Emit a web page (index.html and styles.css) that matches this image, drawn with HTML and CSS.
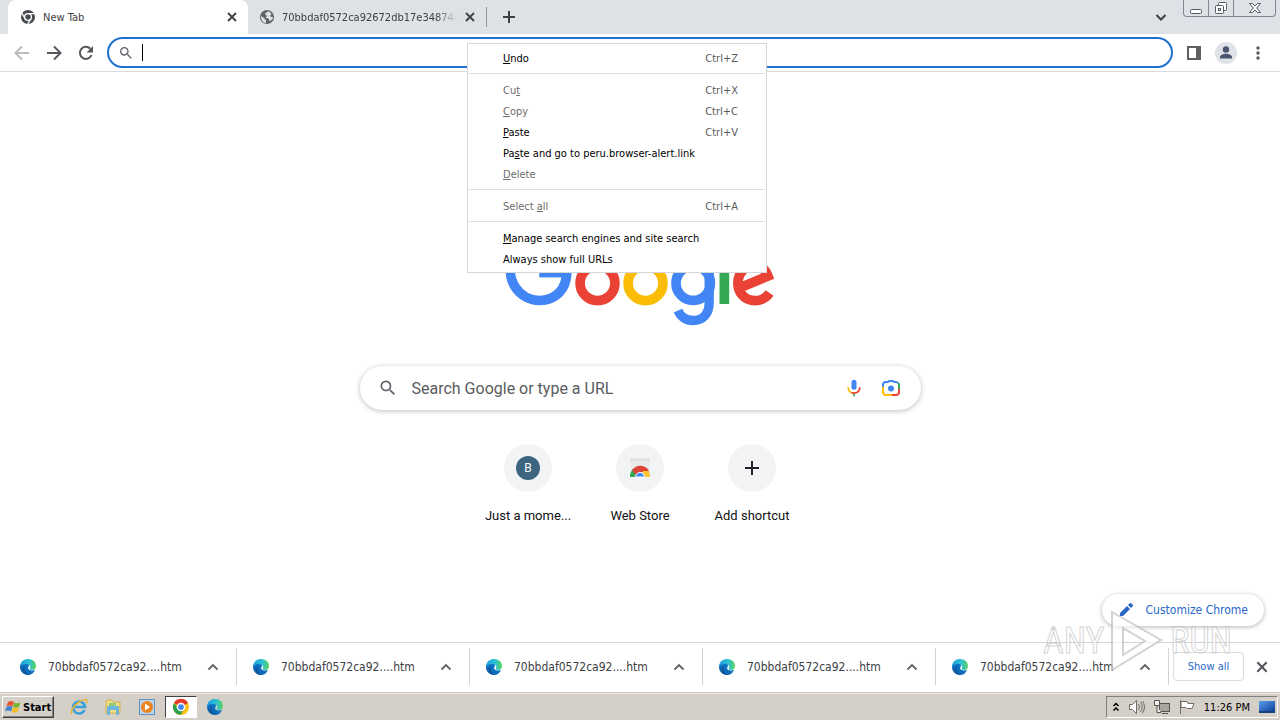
FILE: index.html
```html
<!DOCTYPE html>
<html lang="en">
<head>
<meta charset="utf-8">
<title>New Tab</title>
<link rel="stylesheet" href="styles.css">
</head>
<body>
<svg class="defs" aria-hidden="true">
  <defs>
    <linearGradient id="edgeBlue" x1="0" y1="1" x2="1" y2="0"><stop offset="0" stop-color="#0c59a4"/><stop offset="1" stop-color="#1185d8"/></linearGradient>
    <linearGradient id="edgeTeal" x1="0" y1="0" x2="1" y2="0"><stop offset="0" stop-color="#1b9de2"/><stop offset=".6" stop-color="#2fc2d0"/><stop offset="1" stop-color="#5bd45b"/></linearGradient>
    <linearGradient id="screen" x1="0" y1="0" x2="1" y2="1"><stop offset="0" stop-color="#5aa0ee"/><stop offset="1" stop-color="#0d3f9b"/></linearGradient>
    <symbol id="edge" viewBox="0 0 18 18">
      <path d="M1 9C1 5 5 3 8 5c3 1 2 4 1 5 0 2 3 3 7 2-1 3-4 5-7 5-5 0-8-4-8-8z" fill="url(#edgeBlue)"/>
      <path d="M1 8C2 3 5 1 9 1c5 0 8 3 8 7 0 3-2 4-4 4-2 0-3-1-2-2 1-2-1-4-4-4-3 0-5 1-6 3z" fill="url(#edgeTeal)"/>
      <path d="M6 8c-2 4 0 8 4 9-5 0-8-5-4-9z" fill="#0a4a8c"/>
    </symbol>
    <symbol id="chev" viewBox="0 0 12 12"><path d="M1.500 8.500L6 4l4.500 4.500" fill="none" stroke="#5f6368" stroke-width="1.800"/></symbol>
    <symbol id="cross" viewBox="0 0 12 12"><path d="M2 2l8 8M10 2l-8 8" fill="none" stroke="currentColor" stroke-width="1.800"/></symbol>
    <symbol id="lens" viewBox="0 0 24 24"><path d="M15.500 14h-.79l-.28-.27A6.470 6.470 0 0 0 16 9.500 6.500 6.500 0 1 0 9.500 16c1.610 0 3.090-.59 4.230-1.570l.27.28v.79l5 4.990L20.490 19zm-6 0C7.010 14 5 11.990 5 9.500S7.010 5 9.500 5 14 7.010 14 9.500 11.990 14 9.500 14z" fill="#5f6368"/></symbol>
  </defs>
</svg>

<header class="tabstrip">
  <div class="tab tab-active">
    <svg class="i16" viewBox="0 0 16 16"><circle cx="8" cy="8" r="7" fill="#46494d"/><circle cx="8" cy="8" r="3.400" fill="#46494d" stroke="#fff" stroke-width="1.300"/><path d="M8 4.700h6.500M5.100 9.700L2 4.300M10.900 9.600l-3.200 5.500" stroke="#fff" stroke-width="1.300"/></svg>
    <span class="tab-title">New Tab</span>
    <button class="plain" aria-label="Close tab"><svg class="i12"><use href="#cross"/></svg></button>
  </div>
  <div class="tab tab-back">
    <svg class="i16" viewBox="0 0 16 16"><circle cx="8" cy="8" r="7" fill="#5f6368"/><path d="M9 2c-1 2-2 1-3 3 0 1 2 1 2 2s-2 1-1 2c2 0 4 1 3 3 2 0 4-2 4-4-1 0-2 0-3-1 0-1 2-1 1-3zM2 7l3 2c1 1 1 2 2 2v3c-3 0-5-3-5-7z" fill="#dee1e6"/></svg>
    <span class="tab-title fade">70bbdaf0572ca92672db17e34874d3</span>
    <button class="plain" aria-label="Close tab"><svg class="i12"><use href="#cross"/></svg></button>
  </div>
  <button class="plain new-tab" aria-label="New tab"><svg class="i12" viewBox="0 0 12 12"><path d="M6 0v12M0 6h12" stroke="#3c4043" stroke-width="2"/></svg></button>
  <span class="grow"></span>
  <button class="plain tab-search" aria-label="Search tabs"><svg class="i12" viewBox="0 0 12 12"><path d="M1.500 4L6 8.500 10.500 4" fill="none" stroke="#3c4043" stroke-width="2"/></svg></button>
  <div class="win">
    <button aria-label="Minimize"><svg width="14" height="14" viewBox="0 0 14 14"><rect x="1.500" y="8.500" width="11" height="4" rx="1" fill="#fff" stroke="#555b66"/></svg></button>
    <button aria-label="Restore"><svg width="14" height="14" viewBox="0 0 14 14"><g fill="#fff" stroke="#555b66"><rect x="4.500" y="1.500" width="8" height="8" rx="1"/><rect x="1.500" y="4.500" width="8" height="8" rx="1"/><rect x="4.500" y="7.500" width="2" height="2"/></g></svg></button>
    <button aria-label="Close"><svg width="14" height="14" viewBox="0 0 14 14"><path d="M1.500 2.500h3L7 5l2.500-2.500h3L8.700 7l3.800 4.500h-3L7 9l-2.500 2.500h-3L5.300 7z" fill="#fff" stroke="#555b66"/></svg></button>
  </div>
</header>

<nav class="toolbar">
  <button class="plain" aria-label="Back"><svg class="i16" viewBox="0 0 16 16"><path d="M15 8H2M8 1.500L1.500 8 8 14.500" fill="none" stroke="#babcbe" stroke-width="2"/></svg></button>
  <button class="plain" aria-label="Forward"><svg class="i16" viewBox="0 0 16 16"><path d="M1 8h13M8 1.500L14.500 8 8 14.500" fill="none" stroke="#55585c" stroke-width="2"/></svg></button>
  <button class="plain" aria-label="Reload"><svg class="i16" viewBox="0 0 16 16"><path d="M13.500 10A6 6 0 1 1 12.300 3.800" fill="none" stroke="#55585c" stroke-width="2"/><path d="M15 1v6.500H8.500z" fill="#55585c"/></svg></button>
  <div class="omnibox">
    <svg class="i16"><use href="#lens"/></svg>
    <span class="caret"></span>
    <input type="text" aria-label="Address and search bar">
  </div>
  <button class="plain" aria-label="Side panel"><svg class="i16" viewBox="0 0 16 16"><path d="M1 1h14v14H1zM3 3v10h7V3z" fill="#5f5f5f" fill-rule="evenodd"/></svg></button>
  <button class="plain profile" aria-label="Profile"><svg width="22" height="22" viewBox="0 0 22 22"><circle cx="11" cy="11" r="11" fill="#dfe2e6"/><circle cx="11" cy="7.500" r="3.200" fill="#4d5670"/><path d="M5 16.500v-1.500c0-2 3-3.300 6-3.300s6 1.300 6 3.300v1.500z" fill="#4d5670"/></svg></button>
  <button class="plain" aria-label="Menu"><svg class="i16" viewBox="0 0 16 16" fill="#55585c"><circle cx="8" cy="3" r="1.700"/><circle cx="8" cy="8" r="1.700"/><circle cx="8" cy="13" r="1.700"/></svg></button>
</nav>

<main class="page">
  <svg class="logo" viewBox="0 0 272 92" role="img" aria-label="Google" fill="none" stroke-width="9.700">
    <path d="M56.400 13.400A29.600 29.600 0 1 0 35.300 64.500C52 64.500 62.500 53 62.500 36.700" stroke="#4285f4"/>
    <rect x="35.300" y="32" width="32" height="9.400" fill="#4285f4"/>
    <circle cx="93.500" cy="47.200" r="17.400" stroke="#ea4335"/>
    <circle cx="141.500" cy="47.200" r="17.400" stroke="#fbbc05"/>
    <circle cx="189.200" cy="47.200" r="17.200" stroke="#4285f4"/>
    <path d="M205.200 26.300V66c0 12-6 18.500-16.300 18.500-7 0-12.500-4-15-9.800" stroke="#4285f4" stroke-width="9.300"/>
    <rect x="215.500" y="3" width="9.700" height="65" fill="#34a853"/>
    <path d="M265.600 57C262 62 257.500 64.600 251.100 64.600c-10 0-17.200-7.400-17.200-17.400 0-10.500 7.400-17.500 16.200-17.500 7 0 11.500 4 13.900 10.400L236.500 51.400" stroke="#ea4335"/>
  </svg>
  <div class="search">
    <svg class="i20"><use href="#lens"/></svg>
    <input type="text" placeholder="Search Google or type a URL" aria-label="Search Google or type a URL">
    <button class="plain" aria-label="Voice search"><svg class="i20" viewBox="0 0 24 24"><rect x="9" y="2" width="6" height="12" rx="3" fill="#4285f4"/><path d="M11 18h2v4h-2z" fill="#34a853"/><path d="M5 11c0 4 2 6 4.500 7" fill="none" stroke="#fbbc05" stroke-width="2"/><path d="M9 17.500c5 2 10-1 10-6.500" fill="none" stroke="#ea4335" stroke-width="2"/></svg></button>
    <button class="plain" aria-label="Image search"><svg class="i20" viewBox="0 0 20 20" fill="none" stroke-width="2"><path d="M2 10V7a3 3 0 0 1 3-3h2l1-1h4l1 1h2a3 3 0 0 1 2 1" stroke="#4285f4"/><path d="M17 5q1 1 1 2v7" stroke="#34a853"/><path d="M18 11v3a3 3 0 0 1-3 3h-4" stroke="#ea4335"/><path d="M2 9v5a3 3 0 0 0 3 3h6" stroke="#fbbc05"/><circle cx="10" cy="10.500" r="3" fill="#4285f4"/></svg></button>
  </div>
  <div class="tiles">
    <a class="tile" href="#"><span class="disc"><span class="letter">B</span></span>Just a mome...</a>
    <a class="tile" href="#"><span class="disc"><svg width="24" height="24" viewBox="0 0 24 24"><path d="M2 2h20l-1 16H3z" fill="#eaeaea"/><path d="M2 3h20v2H2z" fill="#dedede"/><path d="M2 21a10 10 0 0 1 3-8l4 8z" fill="#34a853"/><path d="M4 14a10 10 0 0 1 17 1l-2 1H12l-4 3z" fill="#dc4535"/><path d="M15 15h6q1 3 1 6h-8z" fill="#fbc534"/><path d="M7.500 21a4.500 4.500 0 0 1 9 0z" fill="#4285f4" stroke="#fff"/></svg></span>Web Store</a>
    <button class="tile plain"><span class="disc"><svg width="14" height="14" viewBox="0 0 14 14"><path d="M7 0v14M0 7h14" stroke="#202124" stroke-width="2"/></svg></span>Add shortcut</button>
  </div>
  <button class="customize"><svg class="i16" viewBox="0 0 16 16"><path d="M2 14v-3l7-7 3 3-7 7zM10 3l1.500-1.500q1-1 2 0l1 1q1 1 0 2L13 6z" fill="#2867c9"/></svg>Customize Chrome</button>
</main>

<footer class="downloads">
  <div class="item"><svg class="i18"><use href="#edge"/></svg><span>70bbdaf0572ca92....htm</span><button class="plain" aria-label="Options"><svg class="i12"><use href="#chev"/></svg></button></div>
  <div class="item"><svg class="i18"><use href="#edge"/></svg><span>70bbdaf0572ca92....htm</span><button class="plain" aria-label="Options"><svg class="i12"><use href="#chev"/></svg></button></div>
  <div class="item"><svg class="i18"><use href="#edge"/></svg><span>70bbdaf0572ca92....htm</span><button class="plain" aria-label="Options"><svg class="i12"><use href="#chev"/></svg></button></div>
  <div class="item"><svg class="i18"><use href="#edge"/></svg><span>70bbdaf0572ca92....htm</span><button class="plain" aria-label="Options"><svg class="i12"><use href="#chev"/></svg></button></div>
  <div class="item"><svg class="i18"><use href="#edge"/></svg><span>70bbdaf0572ca92....htm</span><button class="plain" aria-label="Options"><svg class="i12"><use href="#chev"/></svg></button></div>
  <button class="show-all">Show all</button>
  <button class="plain close-bar" aria-label="Close downloads"><svg width="14" height="14"><use href="#cross"/></svg></button>
</footer>

<div class="taskbar">
  <button class="start"><svg width="17" height="16" viewBox="0 0 17 16"><path d="M3 3q3-2 6 0L7.500 7.500q-3-2-6 0z" fill="#e8502a"/><path d="M9.500 3.500q3 1.500 6 0L14 8q-3 1.500-6 0z" fill="#79b52c"/><path d="M1.500 8q3-2 6 0L6 12.500q-3-2-6 0z" fill="#3f83d6"/><path d="M8 8.500q3 1.500 6 0L12.500 13q-3 1.500-6 0z" fill="#f4bc28"/></svg>Start</button>
  <div class="quick">
    <button class="plain" aria-label="Internet Explorer"><svg class="i18" viewBox="0 0 18 18" fill="none"><path d="M14.500 12A6 6 0 1 1 15 9H4" stroke="#3aa0dc" stroke-width="2.600"/><path d="M2 16C0 13 4 7 9 4s8-3 8-1q0 1-1 2" stroke="#e6b532" stroke-width="1.500"/></svg></button>
    <button class="plain" aria-label="Explorer"><svg class="i18" viewBox="0 0 18 18"><path d="M2 4l1-2h5l1 2h7v11H2z" fill="#f3dc82" stroke="#cfae4c"/><path d="M5 5h7v3H5z" fill="#8fcb76"/><path d="M3 17V9q0-1 1-1h10q1 0 1 1v8h-3v-5H6v5z" fill="#6bb5df"/></svg></button>
    <button class="plain" aria-label="Media Player"><svg class="i18" viewBox="0 0 18 18"><rect x="1.500" y="1.500" width="15" height="15" fill="#b9d5ee" stroke="#6492c0"/><circle cx="9" cy="9" r="6" fill="#ee8420"/><path d="M7 5.500l5 3.500-5 3.500z" fill="#fff"/></svg></button>
    <button class="plain pressed" aria-label="Chrome"><svg class="i18" viewBox="0 0 18 18"><circle cx="9" cy="9" r="8" fill="#fbc116"/><path d="M9 9L2 5a8 8 0 0 1 14 0z" fill="#e23b2e"/><path d="M2 5a8 8 0 0 0 6.500 12L12 11 6 10z" fill="#2da04c"/><circle cx="9" cy="9" r="3.600" fill="#4285f4" stroke="#fff" stroke-width="1.500"/></svg></button>
    <button class="plain" aria-label="Edge"><svg class="i18"><use href="#edge"/></svg></button>
  </div>
  <span class="grow"></span>
  <div class="tray">
    <svg width="8" height="12" viewBox="0 0 8 12"><path d="M1.500 5L4 2.500 6.500 5M1.500 9.500L4 7l2.500 2.500" fill="none" stroke="#000" stroke-width="1.500"/></svg>
    <svg width="16" height="16" viewBox="0 0 16 16" fill="none" stroke="#6f6c66"><path d="M.5 5.500h3l4-4v13l-4-4h-3z" fill="#fff"/><path d="M9.500 5q2 3 0 6M11.500 3q3.500 5 0 10M13.500 2q4 6 0 12"/></svg>
    <svg width="16" height="16" viewBox="0 0 16 16" stroke="#55534f"><rect x="5.500" y="4.500" width="10" height="8" fill="#aaa69d"/><path d="M8 14.500h6M.5 1.500h5v5h-5zM3 7v6.500h4" fill="#f4f4f4"/></svg>
    <svg width="16" height="16" viewBox="0 0 16 16" stroke="#6f6c66" fill="#fff"><path d="M1.500 1v14M2 2.500h6l1 2h6l-2 5H8l-1-1H2z"/></svg>
    <time>11:26 PM</time>
    <svg width="16" height="14" viewBox="0 0 16 14"><path d="M0 1h16v10H0z" fill="url(#screen)"/><path d="M0 11h16v2H0z" fill="#184178"/></svg>
  </div>
</div>

<div class="menu" role="menu">
  <button role="menuitem"><span><u>U</u>ndo</span><kbd>Ctrl+Z</kbd></button>
  <hr>
  <button role="menuitem" disabled><span>Cu<u>t</u></span><kbd>Ctrl+X</kbd></button>
  <button role="menuitem" disabled><span><u>C</u>opy</span><kbd>Ctrl+C</kbd></button>
  <button role="menuitem"><span><u>P</u>aste</span><kbd>Ctrl+V</kbd></button>
  <button role="menuitem"><span>Pa<u>s</u>te and go to peru.browser-alert.link</span></button>
  <button role="menuitem" disabled><span><u>D</u>elete</span></button>
  <hr>
  <button role="menuitem" disabled><span>Select <u>a</u>ll</span><kbd>Ctrl+A</kbd></button>
  <hr>
  <button role="menuitem"><span><u>M</u>anage search engines and site search</span></button>
  <button role="menuitem"><span>Always show full URLs</span></button>
</div>

<div class="watermark"><span>ANY</span><svg width="56" height="66" viewBox="0 0 56 66"><path d="M3 4L52 32 3 62V4zM14 20v27l22-14z" fill="#fff" fill-opacity=".6" fill-rule="evenodd" stroke="#b4b4b4" stroke-opacity=".6" stroke-width="2"/></svg><span>RUN</span></div>
</body>
</html>
```
FILE: styles.css
```css
* { box-sizing: border-box; }
body {
  margin: 0;
  height: 100vh;
  display: flex;
  flex-direction: column;
  overflow: hidden;
  background: #fff;
  color: #202124;
  font-family: "DejaVu Sans Condensed", "DejaVu Sans", sans-serif;
  font-size: 11px;
}
button, input { font: inherit; color: inherit; }
svg { display: block; flex: none; }
.defs { position: absolute; width: 0; height: 0; }
.i12 { width: 12px; height: 12px; }
.i16 { width: 16px; height: 16px; }
.i18 { width: 18px; height: 18px; }
.i20 { width: 20px; height: 20px; }
.grow { flex: 1; }
.plain {
  display: flex;
  align-items: center;
  justify-content: center;
  padding: 0;
  border: 0;
  background: none;
}

.tabstrip { display: flex; height: 34px; flex: none; background: #dee1e6; }
.tab { display: flex; align-items: center; gap: 7px; width: 240px; color: #3c4043; }
.tab-active { margin-left: 8px; padding: 0 10px 0 12px; background: #fff; border-radius: 8px 8px 0 0; }
.tab-back { padding: 0 10px 0 11px; border-right: 1px solid #929599; width: 239px; background: #dee1e6; border-image: linear-gradient(transparent 8px, #929599 8px, #929599 26px, transparent 26px) 1; }
.tab-title { flex: 1; overflow: hidden; white-space: nowrap; }
.fade { mask-image: linear-gradient(to right, #000 88%, transparent); }
.new-tab { width: 43px; }
.tab-search { width: 20px; margin-right: 12px; }
.win { display: flex; height: 17px; margin-right: 4px; border: 1px solid #82868e; border-top: 0; border-radius: 0 0 4px 4px; }
.win button { display: flex; align-items: center; justify-content: center; width: 25px; padding: 0; border: 0; border-right: 1px solid #82868e; background: none; }
.win button:last-child { width: 41px; border: 0; }

.toolbar { display: flex; flex: none; align-items: center; height: 38px; gap: 16px; padding: 0 14px; border-bottom: 1px solid #d9dadc; }
.omnibox { flex: 1; display: flex; align-items: center; height: 31px; margin: 0 -3px; padding: 0 14px 0 9px; border: 2px solid #2070cf; border-radius: 16px; }
.profile { margin: 0 -3px; }
.caret { width: 1px; height: 17px; margin-left: 8px; background: #000; }
.omnibox input { flex: 1; border: 0; outline: 0; background: none; }

.page { flex: 1; position: relative; display: flex; flex-direction: column; align-items: center; padding-top: 164px; font-family: Roboto, sans-serif; }
.logo { width: 272px; height: 92px; }
.search { display: flex; align-items: center; width: 561px; height: 44px; margin-top: 38px; padding: 0 20px 0 18px; border-radius: 22px; box-shadow: 0 1px 5px rgba(32, 33, 36, .3); }
.search input { flex: 1; margin-left: 14px; padding: 0; border: 0; outline: 0; font-size: 16px; }
.search input::placeholder { color: #5a5c60; }
.search button { margin-left: 17px; }
.tiles { display: flex; margin-top: 34px; }
.tile { display: flex; flex-direction: column; align-items: center; gap: 16px; width: 112px; color: #111; font-size: 13px; line-height: 16px; text-decoration: none; }
.disc { display: flex; align-items: center; justify-content: center; width: 48px; height: 48px; border-radius: 50%; background: #f1f3f4; }
.letter { width: 24px; height: 24px; border-radius: 50%; background: #3c647f; color: #fff; font-size: 12px; line-height: 24px; text-align: center; }
.customize { position: absolute; right: 16px; bottom: 16px; display: flex; align-items: center; gap: 12px; height: 32px; padding: 0 16px; border: 0; border-radius: 16px; background: #fff; color: #2867c9; font-family: "DejaVu Sans Condensed", sans-serif; font-size: 12px; box-shadow: 0 1px 4px rgba(32, 33, 36, .35); }

.downloads { display: flex; flex: none; align-items: center; height: 50px; padding-bottom: 2px; border-top: 1px solid #d5d5d5; color: #3c4043; font-size: 12px; }
.item { display: flex; align-items: center; width: 233px; height: 37px; padding: 0 17px 0 15px; border-right: 1px solid #d0d2d5; }
.item:first-child { width: 237px; padding-left: 19px; }
.item span { flex: 1; margin-left: 11px; white-space: nowrap; }
.show-all { height: 29px; width: 71px; margin-left: 4px; padding: 0; border: 1px solid #dadce0; border-radius: 4px; background: #fff; color: #2867c9; font-size: 11px; }
.close-bar { margin-left: 11px; color: #55585c; }

.taskbar { display: flex; flex: none; align-items: center; height: 28px; padding: 2px 2px 1px; border-top: 1px solid #c4c1ba; background: #d4d0c8; color: #000; box-shadow: inset 0 1px #efede8; }
.start { display: flex; align-items: center; gap: 1px; width: 52px; height: 22px; padding: 0 2px; border: 1px solid; border-color: #fff #404040 #404040 #fff; box-shadow: inset -1px -1px #808080; background: #d4d0c8; font-weight: bold; }
.quick { display: flex; margin-left: 9px; gap: 2px; }
.quick button { width: 32px; height: 22px; }
.quick .pressed { border: 1px solid; border-color: #404040 #fff #fff #404040; background: #fff; }
.tray { display: flex; align-items: center; gap: 9px; height: 22px; padding: 0 2px 0 5px; border: 1px solid; border-color: #808080 #fff #fff #808080; }

.menu { position: absolute; left: 467px; top: 43px; width: 300px; padding: 4px 1px 2px; border: 1px solid #d4d6d9; background: #fff; }
.menu button { display: flex; justify-content: space-between; align-items: center; width: 100%; height: 21px; padding: 0 27px 0 34px; border: 0; background: none; color: #000; white-space: nowrap; }
.menu button:disabled { color: #6d6d6d; }
.menu kbd { font: inherit; color: #5a5a5a; }
.menu hr { height: 1px; margin: 4px 0 6px; border: 0; background: #dadce0; }

.watermark { position: absolute; right: 48px; bottom: 46px; display: flex; align-items: center; gap: 5px; color: rgba(255, 255, 255, .6); font-family: "Roboto Condensed", "Liberation Sans Narrow", Roboto, sans-serif; font-size: 36px; -webkit-text-stroke: 1px rgba(170, 170, 170, .5); pointer-events: none; }
```
